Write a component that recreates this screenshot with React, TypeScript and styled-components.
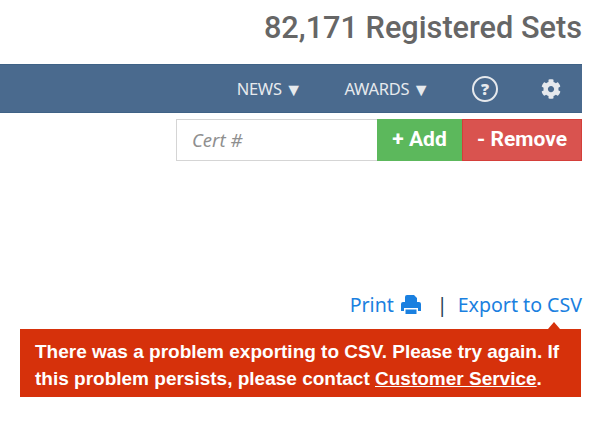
import { FaCog } from "react-icons/fa"
import styled, { createGlobalStyle } from "styled-components"

const GlobalStyle = createGlobalStyle`
  html, body {
    margin: 0;
    padding: 0;
    background: #fff;
    overflow: hidden;
  }
`

export default function App() {
  return (
    <Page>
      <GlobalStyle />
      <Title>82,171 Registered Sets</Title>
      <NavBar>
        <NavLink>NEWS<Caret>▼</Caret></NavLink>
        <NavLink>AWARDS<Caret>▼</Caret></NavLink>
        <HelpIcon>?</HelpIcon>
        <GearIcon>
          <FaCog />
        </GearIcon>
      </NavBar>
      <CertForm>
        <CertInput type="text" placeholder="Cert #" />
        <FormButton $color="#5cb85c" $border="#5cb85c" $width={85}>+ Add</FormButton>
        <FormButton $color="#d9534f" $border="#d43f3a" $width={120}>- Remove</FormButton>
      </CertForm>
      <Links>
        <LinkText>
          Print
          <svg width="20" height="19" viewBox="0 0 20 19" fill="currentColor">
            <path d="M4 2a2 2 0 0 1 2-2h7l3 3v4h2a2 2 0 0 1 2 2v7h-3v-3H3v3H0V9a2 2 0 0 1 2-2h2z" />
            <path d="M4.500 14.500h11V19h-11z" />
          </svg>
        </LinkText>
        <Divider>|</Divider>
        <LinkText>Export to CSV</LinkText>
      </Links>
      <Alert>
        There was a problem exporting to CSV. Please try again. If this problem
        persists, please contact <u>Customer Service</u>.
      </Alert>
    </Page>
  )
}

const Page = styled.div`
  width: 582px;
  height: 421px;
  display: flex;
  flex-direction: column;
  align-items: flex-end;
`

const Title = styled.h1`
  margin: 0;
  height: 64px;
  padding-top: 10px;
  box-sizing: border-box;
  font-family: Roboto, sans-serif;
  font-size: 30.7px;
  line-height: 36px;
  font-weight: 500;
  color: #666;
`

const NavBar = styled.nav`
  width: 100%;
  height: 49px;
  box-sizing: border-box;
  display: flex;
  align-items: center;
  justify-content: flex-end;
  padding-right: 21px;
  background: #4a6a8e;
  border-top: 1px solid #3f6286;
  border-bottom: 1px solid #3f6286;
  color: #e6e9ed;
`

const NavLink = styled.span`
  font-family: "Noto Sans", sans-serif;
  font-size: 16.5px;
  letter-spacing: -0.3px;
  margin-right: 42px;
  display: flex;
  align-items: center;
`

const Caret = styled.span`
  font-size: 18px;
  margin-left: 3px;
  letter-spacing: 0;
`

const HelpIcon = styled.span`
  width: 26px;
  height: 26px;
  box-sizing: border-box;
  border: 2px solid #e6e9ed;
  border-radius: 50%;
  display: flex;
  align-items: center;
  justify-content: center;
  font-family: "Open Sans", sans-serif;
  font-size: 16px;
  font-weight: 800;
  margin-right: 43px;
`

const GearIcon = styled.span`
  display: flex;
  font-size: 20px;
`

const CertForm = styled.div`
  display: flex;
  height: 42px;
  margin-top: 6px;
`

const CertInput = styled.input`
  width: 201px;
  box-sizing: border-box;
  border: 1px solid #d5d5d5;
  border-right: none;
  outline: none;
  padding: 0 15px 2px;
  font-family: "Noto Sans", sans-serif;
  font-size: 18.5px;
  background: #fff;

  &::placeholder {
    color: #8f8f8f;
    font-style: italic;
    opacity: 1;
  }
`

const FormButton = styled.button<{ $color: string; $border: string; $width: number }>`
  width: ${p => p.$width}px;
  height: 100%;
  padding: 0 0 2px;
  border: 1px solid ${p => p.$border};
  background: ${p => p.$color};
  color: #fff;
  font-family: Roboto, sans-serif;
  font-size: 21px;
  font-weight: 700;
`

const Links = styled.div`
  display: flex;
  align-items: center;
  margin-top: 127px;
  height: 32px;
  font-family: "Noto Sans", sans-serif;
  font-size: 19.6px;
`

const LinkText = styled.span`
  display: flex;
  align-items: center;
  gap: 7px;
  color: #1a80e0;
`

const Divider = styled.span`
  color: #263a52;
  margin: 0 10px 0 16px;
`

const Alert = styled.div`
  position: relative;
  width: 561px;
  height: 68px;
  box-sizing: border-box;
  margin-top: 9px;
  margin-right: 1px;
  padding: 9px 15px;
  background: #d6310b;
  color: #fff;
  font-family: "Liberation Sans", Arial, sans-serif;
  font-size: 19px;
  line-height: 27px;
  font-weight: 700;

  &::before {
    content: "";
    position: absolute;
    top: -7px;
    right: 21px;
    border-left: 6px solid transparent;
    border-right: 6px solid transparent;
    border-bottom: 7px solid #d6310b;
  }
`
